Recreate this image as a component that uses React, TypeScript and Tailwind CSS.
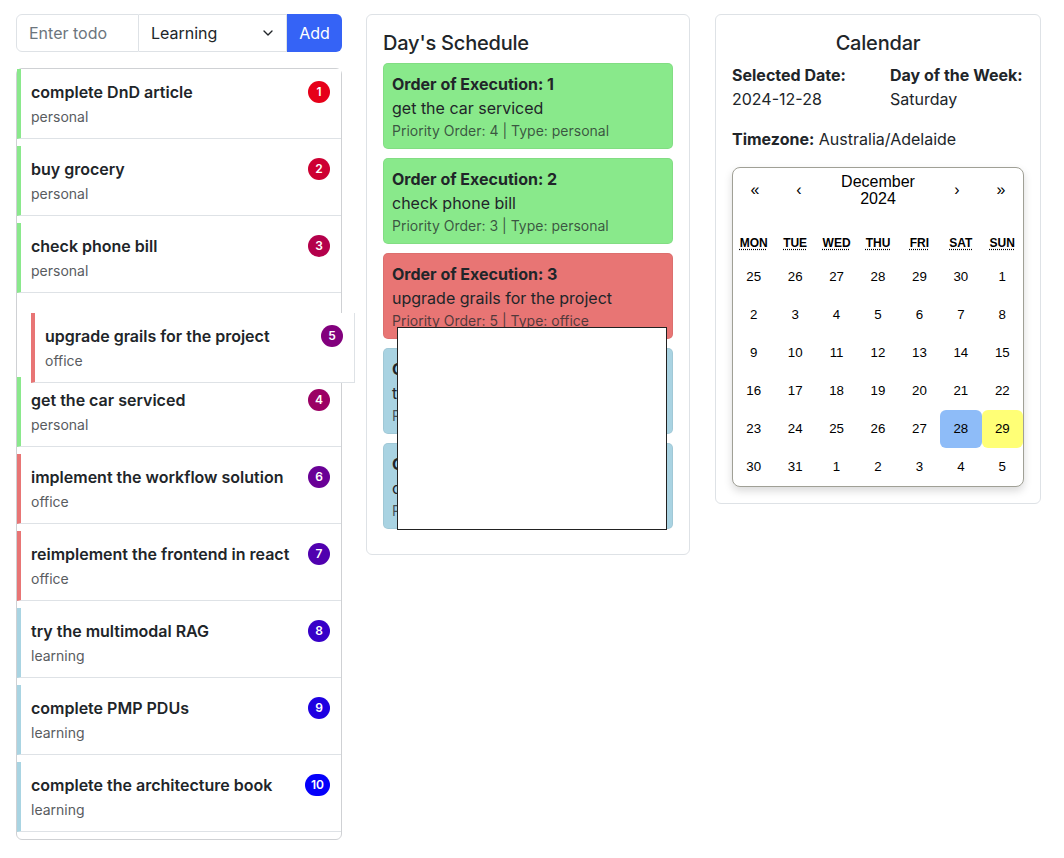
import React from 'react';
import { ChevronDown } from 'lucide-react';

type Todo = { id: number; title: string; type: 'personal' | 'office' | 'learning'; priority: number };

const todos: Todo[] = [
    { id: 1, title: 'complete DnD article', type: 'personal', priority: 1 },
    { id: 2, title: 'buy grocery', type: 'personal', priority: 2 },
    { id: 3, title: 'check phone bill', type: 'personal', priority: 3 },
    { id: 5, title: 'upgrade grails for the project', type: 'office', priority: 5 },
    { id: 4, title: 'get the car serviced', type: 'personal', priority: 4 },
    { id: 6, title: 'implement the workflow solution', type: 'office', priority: 6 },
    { id: 7, title: 'reimplement the frontend in react', type: 'office', priority: 7 },
    { id: 8, title: 'try the multimodal RAG', type: 'learning', priority: 8 },
    { id: 9, title: 'complete PMP PDUs', type: 'learning', priority: 9 },
    { id: 10, title: 'complete the architecture book', type: 'learning', priority: 10 },
];

const draggingId = 5;

const barColor = {
    personal: 'border-l-[#8ae88c]',
    office: 'border-l-[#e87575]',
    learning: 'border-l-[#a9d4e2]',
};

const cardColor = {
    personal: 'bg-[#89e98b]',
    office: 'bg-[#e87574]',
    learning: 'bg-[#a9d3e2]',
};

const schedule = [
    { title: 'get the car serviced', priority: 4, type: 'personal' as const },
    { title: 'check phone bill', priority: 3, type: 'personal' as const },
    { title: 'upgrade grails for the project', priority: 5, type: 'office' as const },
    { title: 'try the multimodal RAG', priority: 8, type: 'learning' as const },
    { title: 'complete PMP PDUs', priority: 9, type: 'learning' as const },
];

const weeks = [
    [25, 26, 27, 28, 29, 30, 1],
    [2, 3, 4, 5, 6, 7, 8],
    [9, 10, 11, 12, 13, 14, 15],
    [16, 17, 18, 19, 20, 21, 22],
    [23, 24, 25, 26, 27, 28, 29],
    [30, 31, 1, 2, 3, 4, 5],
];

const Badge = ({ priority }: { priority: number }) => (
    <span
        className="min-w-[22px] h-[22px] px-[6px] rounded-full text-white text-[12px] font-semibold flex items-center justify-center"
        style={{ backgroundColor: `rgb(${255 - priority * 25}, 0, ${priority * 25})` }}
    >
        {priority}
    </span>
);

const TodoRow = ({ todo }: { todo: Todo }) => (
    <div className={`h-[70px] border-l-4 border-b border-b-[#dee2e6] ${barColor[todo.type]} bg-white pl-[10px] pr-[11px] flex justify-between`}>
        <div className="pt-[11px]">
            <div className="text-[16px] leading-6 font-semibold text-[#212529]">{todo.title}</div>
            <div className="text-[14px] leading-[25px] text-[#595c5f]">{todo.type}</div>
        </div>
        <div className="pt-[12px]">
            <Badge priority={todo.priority} />
        </div>
    </div>
);

export default function App() {
    const dragged = todos.find(t => t.id === draggingId)!;

    return (
        <div className="flex items-start pl-4 pt-[14px] font-['Inter',sans-serif] text-[#212529]">
            {/* Todo column */}
            <div className="w-[326px] shrink-0">
                <div className="flex h-[38px] mb-[16px]">
                    <input
                        placeholder="Enter todo"
                        className="w-[123px] border border-[#dee2e6] rounded-l-md px-3 text-[16px] placeholder:text-[#6c757d] outline-none"
                    />
                    <div className="w-[148px] border-y border-r border-[#dee2e6] flex items-center justify-between pl-3 pr-[10px] text-[16px]">
                        <span>Learning</span>
                        <ChevronDown size={16} strokeWidth={2} />
                    </div>
                    <button className="w-[55px] bg-[#3563f6] text-white text-[16px] rounded-r-md">Add</button>
                </div>

                <div className="relative border border-[#cfd1d4] rounded-md">
                    {todos.map(t =>
                        t.id === draggingId ? (
                            <div key={t.id} className="h-[70px] mb-[7px]" />
                        ) : (
                            <div key={t.id} className="mb-[7px]">
                                <TodoRow todo={t} />
                            </div>
                        )
                    )}
                    <div className="absolute left-[14px] top-[244px] w-[324px] border-r border-[#dee2e6]">
                        <TodoRow todo={dragged} />
                    </div>
                </div>
            </div>

            {/* Day's schedule */}
            <div className="relative ml-6 w-[324px] shrink-0 border border-[#dee2e6] rounded-md p-4">
                <h5 className="text-[20px] leading-6 font-medium tracking-[-0.2px] mb-2">Day's Schedule</h5>
                {schedule.map((s, i) => (
                    <div key={i} className={`${cardColor[s.type]} border border-black/5 rounded-[5px] px-2 pt-2 pb-[7px] mb-[9px]`}>
                        <div className="text-[16px] leading-6 font-bold">Order of Execution: {i + 1}</div>
                        <div className="text-[16px] leading-6">{s.title}</div>
                        <div className="text-[14px] leading-[21px] text-[#212529]/75">
                            Priority Order: {s.priority} | Type: {s.type}
                        </div>
                    </div>
                ))}
                {/* drag preview */}
                <div className="absolute left-[30px] top-[312px] w-[270px] h-[203px] bg-white border border-[#222]" />
            </div>

            {/* Calendar */}
            <div className="ml-[25px] w-[326px] shrink-0 border border-[#dee2e6] rounded-md p-4">
                <h5 className="text-[20px] leading-6 font-medium tracking-[-0.2px] text-center mb-2">Calendar</h5>
                <div className="grid grid-cols-[158px_1fr] text-[16px] leading-6">
                    <div>
                        <div className="font-bold">Selected Date:</div>
                        <div>2024-12-28</div>
                    </div>
                    <div>
                        <div className="font-bold">Day of the Week:</div>
                        <div>Saturday</div>
                    </div>
                </div>
                <div className="mt-4 mb-4 text-[16px] leading-6">
                    <span className="font-bold">Timezone:</span> Australia/Adelaide
                </div>

                <div className="border border-[#a0a096] rounded-lg shadow-[0_4px_8px_rgba(0,0,0,0.15)] bg-white font-['Liberation_Sans',Arial,sans-serif] text-black">
                    <div className="h-[44px] mb-4 flex items-center text-[16px]">
                        <span className="w-[44px] text-center">«</span>
                        <span className="w-[44px] text-center">‹</span>
                        <div className="flex-1 text-center leading-[17px]">
                            <div>December</div>
                            <div>2024</div>
                        </div>
                        <span className="w-[44px] text-center">›</span>
                        <span className="w-[44px] text-center">»</span>
                    </div>
                    <div className="grid grid-cols-7 h-[30px] items-center text-center text-[12px] font-bold">
                        {['MON', 'TUE', 'WED', 'THU', 'FRI', 'SAT', 'SUN'].map(d => (
                            <abbr key={d} className="underline decoration-dotted underline-offset-2">{d}</abbr>
                        ))}
                    </div>
                    <div className="grid grid-cols-7 text-[13.3px]">
                        {weeks.flat().map((d, i) => (
                            <div
                                key={i}
                                className={`h-[38px] flex items-center justify-center rounded-md ${
                                    i === 33 ? 'bg-[#8ebcf8]' : i === 34 ? 'bg-[#ffff76]' : ''
                                }`}
                            >
                                {d}
                            </div>
                        ))}
                    </div>
                </div>
            </div>
        </div>
    );
}
